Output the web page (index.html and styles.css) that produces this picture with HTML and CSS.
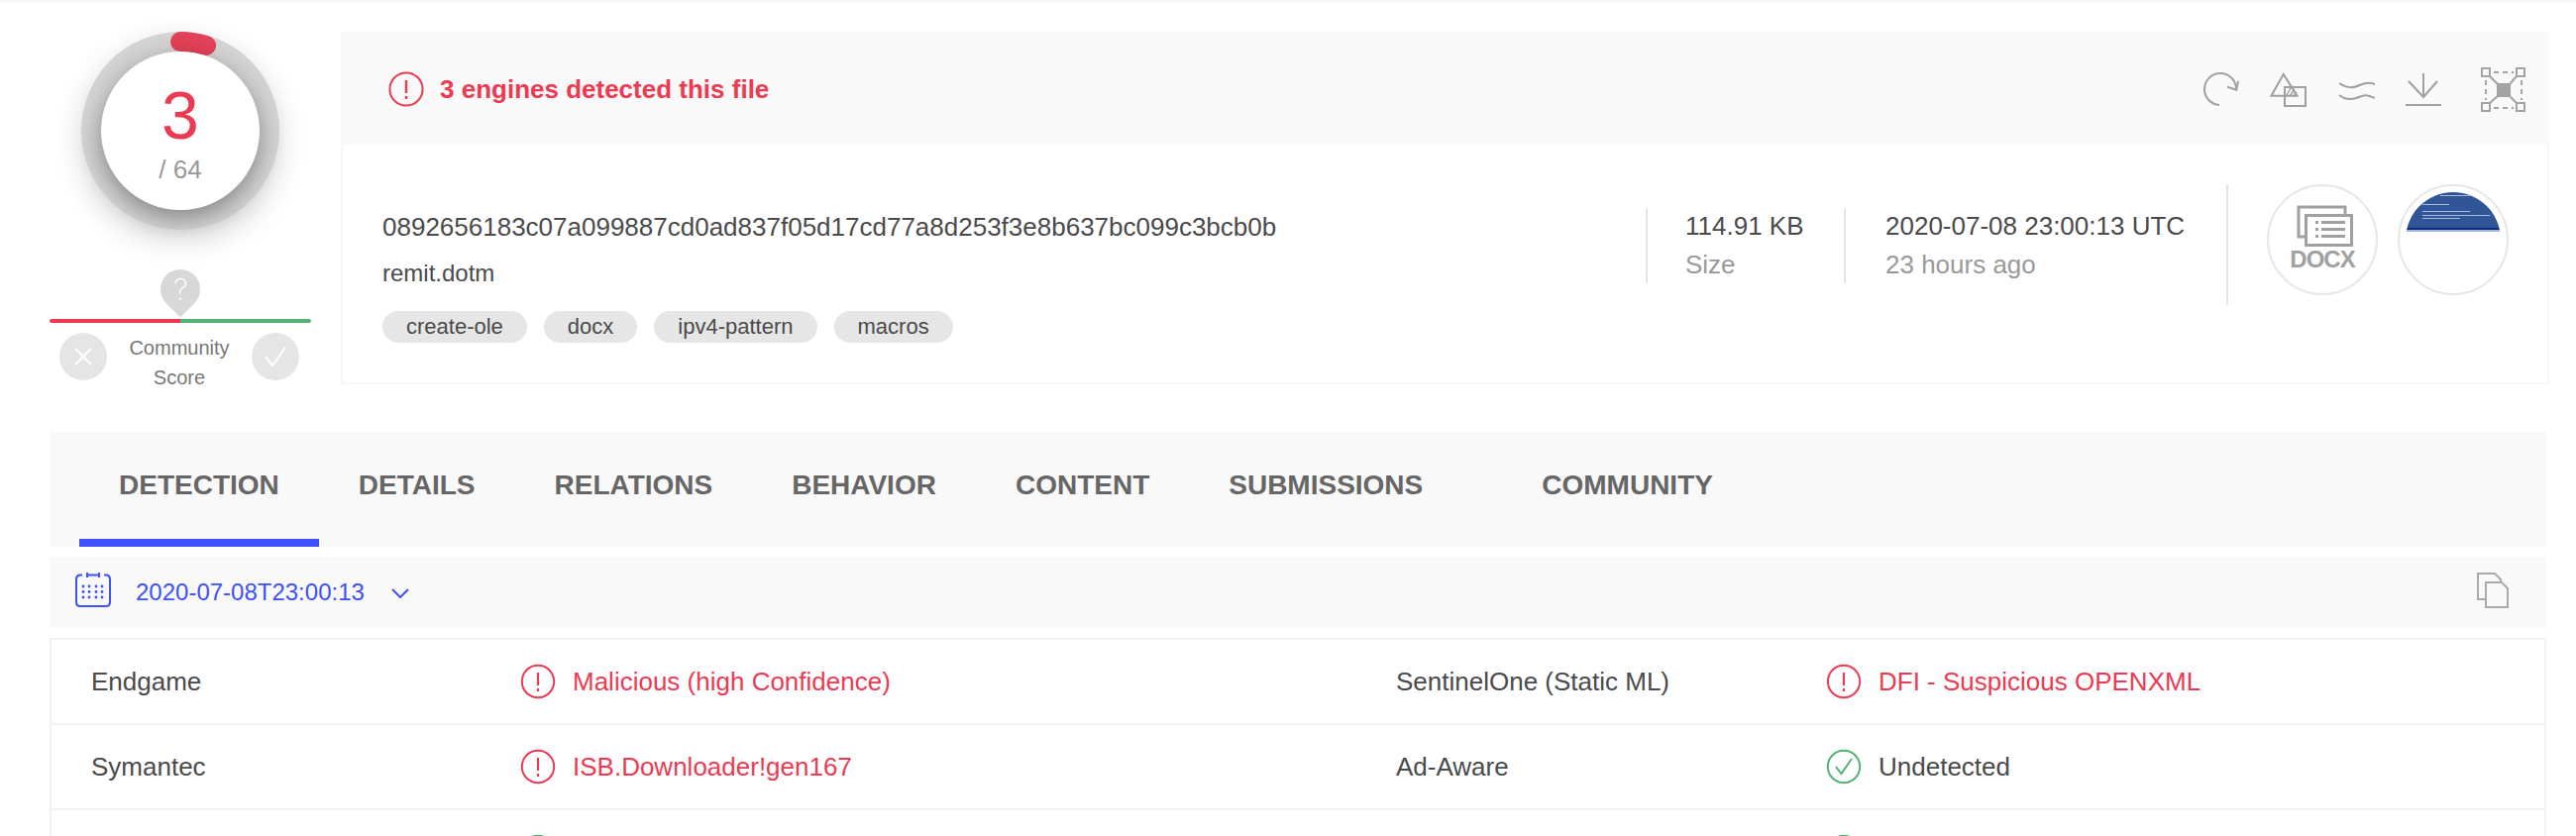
FILE: index.html
```html
<!DOCTYPE html>
<html lang="en">
<head>
<meta charset="utf-8">
<title>VirusTotal</title>
<link rel="stylesheet" href="styles.css">
</head>
<body>
<div class="topstrip"></div>
<main class="page">
  <section class="summary">
    <aside class="score">
      <div class="gauge">
        <svg class="gauge-arc" width="200" height="200" viewBox="0 0 200 200"><path d="M100 10A90 90 0 0 1 126 14" fill="none" stroke="#e44258" stroke-width="20" stroke-linecap="round"/></svg>
        <div class="gauge-face">
          <div class="gauge-num">3</div>
          <div class="gauge-total">/ 64</div>
        </div>
      </div>
      <div class="pin"><span class="pin-mark">?</span></div>
      <div class="meter"><span class="meter-red"></span><span class="meter-green"></span></div>
      <div class="vote">
        <span class="vote-btn"><svg width="18" height="18" viewBox="0 0 18 18"><path d="M1 1L17 17M17 1L1 17" fill="none" stroke="#fff" stroke-width="2"/></svg></span>
        <span class="vote-label">Community<br>Score</span>
        <span class="vote-btn"><svg width="22" height="20" viewBox="0 0 22 20"><path d="M1 10L8 19L21 1" fill="none" stroke="#fff" stroke-width="2"/></svg></span>
      </div>
    </aside>
    <div class="card">
      <header class="card-head">
        <div class="verdict">
          <svg class="alert" width="36" height="36" viewBox="0 0 36 36"><circle cx="18" cy="18" r="16.600" fill="none" stroke="#ec3a52" stroke-width="2"/><path d="M18 9V22M18 25V28" stroke="#ec3a52" stroke-width="2.400" fill="none"/></svg>
          <span>3 engines detected this file</span>
        </div>
        <div class="tools">
          <svg width="40" height="36" viewBox="0 0 40 36"><path d="M19 33A16 16 0 1 1 36 17" fill="none" stroke="#a0a0a0" stroke-width="2"/><path d="M27 14.700L36.300 17.700L38 8.700" fill="none" stroke="#a0a0a0" stroke-width="2"/></svg>
          <svg width="38" height="36" viewBox="0 0 38 36"><path d="M13.700 2L1.500 23.700H27.500Z" fill="none" stroke="#a0a0a0" stroke-width="2"/><rect x="15" y="15" width="21" height="19" fill="none" stroke="#a0a0a0" stroke-width="2"/><path d="M17 23L21 16M20 24L25 17M24 24L27 20" stroke="#a0a0a0" stroke-width="1.500" fill="none"/></svg>
          <svg width="38" height="24" viewBox="0 0 38 24"><path d="M2 5C8 9 15 10 20 8S30 3 38 6M2 17C7 21 13 22 19 20S28 15 38 20" fill="none" stroke="#a0a0a0" stroke-width="2"/></svg>
          <svg width="38" height="34" viewBox="0 0 38 34"><path d="M19 0V24M4 8L19 24L33 8M1 32H37" fill="none" stroke="#a0a0a0" stroke-width="2"/></svg>
          <svg class="tool-expand" width="46" height="46" viewBox="0 0 46 46"><g fill="none" stroke="#a3a3a3" stroke-width="2"><rect x="1" y="1" width="8" height="8"/><rect x="36" y="1" width="8" height="8"/><rect x="1" y="36" width="8" height="8"/><rect x="36" y="36" width="8" height="8"/><path d="M13 5H33M13 41H33M5 13V33M41 13V33" stroke-dasharray="5 4"/><path d="M9 9L18 18M36 9L28 18M9 36L18 28M36 36L28 28"/></g><rect x="16" y="16" width="14" height="14" fill="#a3a3a3"/></svg>
        </div>
      </header>
      <div class="card-body">
        <div class="file-main">
          <div class="hash">0892656183c07a099887cd0ad837f05d17cd77a8d253f3e8b637bc099c3bcb0b</div>
          <div class="filename">remit.dotm</div>
          <div class="chips">
            <span class="chip">create-ole</span>
            <span class="chip">docx</span>
            <span class="chip">ipv4-pattern</span>
            <span class="chip">macros</span>
          </div>
        </div>
        <div class="fact fact-size">
          <div class="fact-top">114.91 KB</div>
          <div class="fact-sub">Size</div>
        </div>
        <div class="fact fact-date">
          <div class="fact-top">2020-07-08 23:00:13 UTC</div>
          <div class="fact-sub">23 hours ago</div>
        </div>
        <div class="previews">
          <div class="circle circle-doc">
            <svg class="doc-glyph" width="58" height="42" viewBox="0 0 58 42"><g fill="none" stroke="#a0a0a0" stroke-width="3"><path d="M8 32H2V2H49V9"/><rect x="9.500" y="10.500" width="46" height="30" fill="#fff"/></g><g fill="#a0a0a0"><rect x="19" y="16" width="3" height="3"/><rect x="19" y="23" width="3" height="3"/><rect x="19" y="30" width="3" height="3"/><rect x="25" y="16" width="24" height="3"/><rect x="25" y="23" width="24" height="3"/><rect x="25" y="30" width="24" height="3"/></g></svg>
            <span class="doc-label">DOCX</span>
          </div>
          <div class="circle circle-thumb">
            <div class="thumb">
              <i class="tl tl1"></i><i class="tl tl2"></i><i class="tl tl3"></i><i class="tl tl4"></i><i class="tl tl5"></i>
            </div>
          </div>
        </div>
      </div>
    </div>
  </section>

  <nav class="tabs">
    <a class="tab tab-on">DETECTION</a>
    <a class="tab">DETAILS</a>
    <a class="tab">RELATIONS</a>
    <a class="tab">BEHAVIOR</a>
    <a class="tab">CONTENT</a>
    <a class="tab">SUBMISSIONS</a>
    <a class="tab tab-last">COMMUNITY</a>
  </nav>

  <div class="datebar">
    <svg class="cal" width="36" height="36" viewBox="0 0 36 36"><path d="M7 3.500H5Q1 3.500 1 8V31Q1 35 5 35H31Q35 35 35 31V8Q35 3.500 31 3.500H29M12 3.500H24M12 1V6M24 1V6" fill="none" stroke="#3d50fa" stroke-width="2"/><g fill="#3d50fa"><circle cx="8" cy="15" r="1.400"/><circle cx="14" cy="15" r="1.400"/><circle cx="21" cy="15" r="1.400"/><circle cx="27" cy="15" r="1.400"/><circle cx="8" cy="20.500" r="1.400"/><circle cx="14" cy="20.500" r="1.400"/><circle cx="21" cy="20.500" r="1.400"/><circle cx="27" cy="20.500" r="1.400"/><circle cx="8" cy="26" r="1.400"/><circle cx="14" cy="26" r="1.400"/><circle cx="21" cy="26" r="1.400"/><circle cx="27" cy="26" r="1.400"/></g></svg>
    <span class="date-text">2020-07-08T23:00:13</span>
    <svg class="chev" width="18" height="10" viewBox="0 0 18 10"><path d="M1 1L9 9L17 1" fill="none" stroke="#3d50fa" stroke-width="2"/></svg>
    <svg class="copy" width="34" height="36" viewBox="0 0 34 36"><g fill="#f9f9f9" stroke="#aaa" stroke-width="2"><path d="M3 1H20L26 7V27H3Z"/><path d="M11 10H27L33 16V35H11Z"/></g></svg>
  </div>

  <section class="results">
    <div class="row">
      <div class="engine">Endgame</div>
      <div class="status bad"><svg width="36" height="36" viewBox="0 0 36 36"><use href="#ico-alert"/></svg>Malicious (high Confidence)</div>
      <div class="engine">SentinelOne (Static ML)</div>
      <div class="status bad"><svg width="36" height="36" viewBox="0 0 36 36"><use href="#ico-alert"/></svg>DFI - Suspicious OPENXML</div>
    </div>
    <div class="row">
      <div class="engine">Symantec</div>
      <div class="status bad"><svg width="36" height="36" viewBox="0 0 36 36"><use href="#ico-alert"/></svg>ISB.Downloader!gen167</div>
      <div class="engine">Ad-Aware</div>
      <div class="status"><svg width="36" height="36" viewBox="0 0 36 36"><use href="#ico-ok"/></svg>Undetected</div>
    </div>
    <div class="row">
      <div class="engine"></div>
      <div class="status"><svg width="36" height="36" viewBox="0 0 36 36"><use href="#ico-ok"/></svg></div>
      <div class="engine"></div>
      <div class="status"><svg width="36" height="36" viewBox="0 0 36 36"><use href="#ico-ok"/></svg></div>
    </div>
  </section>
</main>
<svg class="defs" width="0" height="0">
  <defs>
    <g id="ico-alert"><circle cx="18" cy="18" r="16.200" fill="none" stroke="#ec3a52" stroke-width="2"/><path d="M18 9V22M18 25V28" stroke="#ec3a52" stroke-width="2.200" fill="none"/></g>
    <g id="ico-ok"><circle cx="18" cy="18" r="16.200" fill="none" stroke="#52b374" stroke-width="2"/><path d="M10 18L15.500 25L26 10" stroke="#52b374" stroke-width="2" fill="none"/></g>
  </defs>
</svg>
</body>
</html>
```
FILE: styles.css
```css
* { box-sizing: border-box; }
html, body { margin: 0; padding: 0; height: 844px; overflow: hidden; background: #fff; }
body { font-family: "Liberation Sans", Arial, sans-serif; font-size: 26px; color: #4a4a4a; }
.topstrip { height: 4px; background: linear-gradient(#f4f4f4, #fff); }
.page { padding: 28px 30px 0 50px; }
.defs { display: block; }

.summary { display: flex; align-items: flex-start; }
.score { width: 264px; flex: none; display: flex; flex-direction: column; align-items: center; margin-right: 30px; }
.gauge { position: relative; flex: none; width: 200px; height: 200px; border-radius: 50%; background: #d4d4d4; box-shadow: 0 10px 30px rgba(0,0,0,.16); }
.gauge-arc { position: absolute; left: 0; top: 0; }
.gauge-face { position: absolute; left: 20px; top: 20px; width: 160px; height: 160px; border-radius: 50%; background: #fff; box-shadow: 0 8px 24px rgba(0,0,0,.38); display: flex; flex-direction: column; align-items: center; }
.gauge-num { font-size: 68px; line-height: 68px; color: #ec3a52; margin-top: 30px; }
.gauge-total { font-size: 26px; line-height: 30px; color: #999; margin-top: 6px; }

.pin { width: 40px; height: 40px; margin-top: 40px; border-radius: 50% 50% 0 50%; background: #d8d8d8; transform: rotate(45deg); display: flex; align-items: center; justify-content: center; flex: none; }
.pin-mark { transform: rotate(-45deg); color: #fff; font-family: Inter, "Liberation Sans", sans-serif; font-size: 30px; line-height: 30px; font-weight: 200; }
.meter { display: flex; width: 264px; height: 4px; margin-top: 10px; border-radius: 2px; overflow: hidden; flex: none; }
.meter-red { flex: 1; background: #ec3a52; }
.meter-green { flex: 1; background: #52b374; }
.vote { display: flex; width: 264px; padding: 0 12px 0 10px; margin-top: 10px; justify-content: space-between; }
.vote-btn { width: 48px; height: 48px; border-radius: 50%; background: #e5e5e5; display: flex; align-items: center; justify-content: center; flex: none; }
.vote-label { font-size: 20px; line-height: 30px; color: #777; text-align: center; }

.card { flex: none; width: 2229px; height: 356px; border: 2px solid #f7f7f7; border-top: 0; background: #fff; }
.card-head { height: 114px; margin: 0 -2px; background: #f9f9f9; display: flex; align-items: center; justify-content: space-between; padding: 2px 23px 0 48px; }
.verdict { display: flex; align-items: center; gap: 16px; font-weight: 700; color: #ec3a52; }
.tools { display: flex; align-items: center; gap: 30px; padding-top: 2px; }
.tool-expand { margin-left: 9px; }

.card-body { display: flex; height: 240px; padding: 0 0 0 40px; }
.file-main { width: 1275px; padding-top: 68px; }
.hash { line-height: 30px; }
.filename { font-size: 24px; line-height: 30px; margin-top: 17px; }
.chips { display: flex; gap: 17px; margin-top: 23px; }
.chip { height: 32px; line-height: 32px; padding: 0 24px; border-radius: 16px; background: #e6e6e6; font-size: 22px; color: #4a4a4a; }

.fact { height: 76px; margin-top: 64px; border-left: 2px solid #e5e5e5; padding-left: 38px; }
.fact-size { width: 200px; }
.fact-date { width: 386px; padding-left: 40px; }
.fact-top { line-height: 30px; margin-top: 3px; }
.fact-sub { line-height: 30px; margin-top: 9px; color: #999; }

.previews { display: flex; gap: 20px; height: 122px; margin-top: 40px; border-left: 2px solid #e5e5e5; padding-left: 39px; }
.circle { position: relative; width: 112px; height: 112px; border-radius: 50%; border: 2px solid #e6e6e6; background: #fff; }
.circle-doc { display: flex; flex-direction: column; align-items: center; }
.doc-glyph { margin-top: 19px; margin-left: 6px; }
.doc-label { font-size: 24px; line-height: 20px; font-weight: 700; color: #a0a0a0; letter-spacing: -1px; margin-top: 3px; }
.circle-thumb { padding: 6px; }
.thumb { position: relative; width: 96px; height: 96px; border-radius: 50%; overflow: hidden; background: linear-gradient(#2f5597 0, #2f5597 36px, #0d2c80 36px, #0d2c80 38px, #a5b5d5 38px, #a5b5d5 40px, #fff 40px); }
.tl { position: absolute; display: block; height: 1px; background: #a9bbdc; }
.tl1 { left: 35px; top: 3px; width: 30px; }
.tl2 { left: 17px; top: 12px; width: 27px; }
.tl3 { left: 17px; top: 19px; width: 48px; }
.tl4 { left: 17px; top: 23px; width: 68px; }
.tl5 { left: 17px; top: 26px; width: 38px; }

.tabs { display: flex; height: 116px; margin-top: 40px; padding-left: 30px; background: #f9f9f9; }
.tab { display: block; padding: 34px 40px 0; height: 116px; font-size: 28px; line-height: 40px; font-weight: 700; color: #666; }
.tab-on { border-bottom: 8px solid #3d50fa; }
.tab-last { margin-left: 40px; }

.datebar { display: flex; align-items: center; height: 72px; margin-top: 10px; padding: 0 38px 0 26px; background: #f9f9f9; }
.cal { margin-top: -6px; }
.date-text { font-size: 24px; color: #3d50fa; margin-left: 25px; }
.chev { margin-left: 27px; margin-top: 1px; }
.copy { margin-left: auto; margin-top: -4px; }

.results { margin-top: 10px; border: 2px solid #f2f2f2; border-bottom: 0; }
.row { display: grid; grid-template-columns: 433px 884px 434px 1fr; align-items: center; height: 86px; padding-left: 40px; border-bottom: 2px solid #f2f2f2; }
.status { display: flex; align-items: center; gap: 17px; color: #4a4a4a; }
.status svg { flex: none; }
.bad { color: #ec3a52; }
```
